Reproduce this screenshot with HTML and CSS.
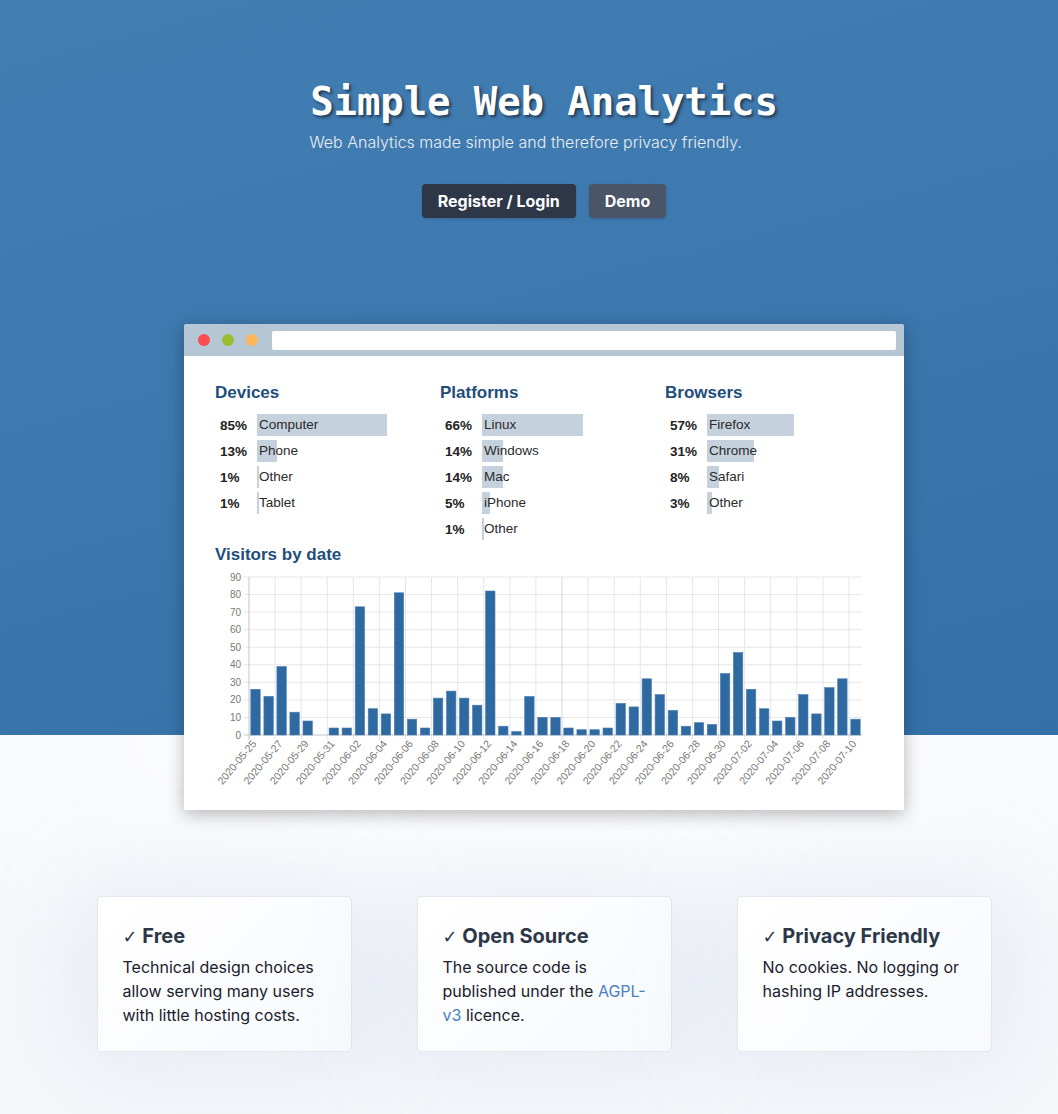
FILE: index.html
```html
<!DOCTYPE html>
<html lang="en">
<head>
<meta charset="utf-8">
<title>Simple Web Analytics</title>
<link rel="stylesheet" href="styles.css">
</head>
<body>
<section class="hero">
  <div class="intro">
    <h1 class="title">Simple Web Analytics</h1>
    <p class="subtitle">Web Analytics made simple and therefore privacy friendly.</p>
  </div>
  <div class="actions">
    <a class="btn btn-dark" href="#">Register / Login</a>
    <a class="btn btn-gray" href="#">Demo</a>
  </div>
  <div class="window">
    <div class="window-bar">
      <span class="dot dot-red"></span>
      <span class="dot dot-green"></span>
      <span class="dot dot-yellow"></span>
      <span class="address"></span>
    </div>
    <div class="window-body">
      <div class="stats">
        <div class="stat">
          <h2 class="stat-title">Devices</h2>
          <div class="rows">
            <div class="row"><span class="pct">85%</span><span class="cell"><span class="bar" style="width:85%"></span><span class="label">Computer</span></span></div>
            <div class="row"><span class="pct">13%</span><span class="cell"><span class="bar" style="width:13%"></span><span class="label">Phone</span></span></div>
            <div class="row"><span class="pct">1%</span><span class="cell"><span class="bar" style="width:1%"></span><span class="label">Other</span></span></div>
            <div class="row"><span class="pct">1%</span><span class="cell"><span class="bar" style="width:1%"></span><span class="label">Tablet</span></span></div>
          </div>
        </div>
        <div class="stat">
          <h2 class="stat-title">Platforms</h2>
          <div class="rows">
            <div class="row"><span class="pct">66%</span><span class="cell"><span class="bar" style="width:66%"></span><span class="label">Linux</span></span></div>
            <div class="row"><span class="pct">14%</span><span class="cell"><span class="bar" style="width:14%"></span><span class="label">Windows</span></span></div>
            <div class="row"><span class="pct">14%</span><span class="cell"><span class="bar" style="width:14%"></span><span class="label">Mac</span></span></div>
            <div class="row"><span class="pct">5%</span><span class="cell"><span class="bar" style="width:5%"></span><span class="label">iPhone</span></span></div>
            <div class="row"><span class="pct">1%</span><span class="cell"><span class="bar" style="width:1%"></span><span class="label">Other</span></span></div>
          </div>
        </div>
        <div class="stat">
          <h2 class="stat-title">Browsers</h2>
          <div class="rows">
            <div class="row"><span class="pct">57%</span><span class="cell"><span class="bar" style="width:57%"></span><span class="label">Firefox</span></span></div>
            <div class="row"><span class="pct">31%</span><span class="cell"><span class="bar" style="width:31%"></span><span class="label">Chrome</span></span></div>
            <div class="row"><span class="pct">8%</span><span class="cell"><span class="bar" style="width:8%"></span><span class="label">Safari</span></span></div>
            <div class="row"><span class="pct">3%</span><span class="cell"><span class="bar" style="width:3%"></span><span class="label">Other</span></span></div>
          </div>
        </div>
      </div>
      <h2 class="stat-title chart-title">Visitors by date</h2>
      <svg class="chart" width="720" height="220" viewBox="0 0 720 220" xmlns="http://www.w3.org/2000/svg">
        <g class="grid">
          <line x1="60" y1="148.4" x2="678" y2="148.4"/>
          <line x1="60" y1="130.9" x2="678" y2="130.9"/>
          <line x1="60" y1="113.3" x2="678" y2="113.3"/>
          <line x1="60" y1="95.8" x2="678" y2="95.8"/>
          <line x1="60" y1="78.2" x2="678" y2="78.2"/>
          <line x1="60" y1="60.7" x2="678" y2="60.7"/>
          <line x1="60" y1="43.1" x2="678" y2="43.1"/>
          <line x1="60" y1="25.6" x2="678" y2="25.6"/>
          <line x1="60" y1="8" x2="678" y2="8"/>
          <line x1="91.1" y1="8" x2="91.1" y2="171"/>
          <line x1="117.2" y1="8" x2="117.2" y2="171"/>
          <line x1="143.3" y1="8" x2="143.3" y2="171"/>
          <line x1="169.3" y1="8" x2="169.3" y2="171"/>
          <line x1="195.4" y1="8" x2="195.4" y2="171"/>
          <line x1="221.5" y1="8" x2="221.5" y2="171"/>
          <line x1="247.6" y1="8" x2="247.6" y2="171"/>
          <line x1="273.7" y1="8" x2="273.7" y2="171"/>
          <line x1="299.8" y1="8" x2="299.8" y2="171"/>
          <line x1="325.9" y1="8" x2="325.9" y2="171"/>
          <line x1="351.9" y1="8" x2="351.9" y2="171"/>
          <line x1="404.1" y1="8" x2="404.1" y2="171"/>
          <line x1="430.2" y1="8" x2="430.2" y2="171"/>
          <line x1="456.3" y1="8" x2="456.3" y2="171"/>
          <line x1="482.4" y1="8" x2="482.4" y2="171"/>
          <line x1="508.4" y1="8" x2="508.4" y2="171"/>
          <line x1="534.5" y1="8" x2="534.5" y2="171"/>
          <line x1="560.6" y1="8" x2="560.6" y2="171"/>
          <line x1="586.7" y1="8" x2="586.7" y2="171"/>
          <line x1="612.8" y1="8" x2="612.8" y2="171"/>
          <line x1="638.9" y1="8" x2="638.9" y2="171"/>
          <line x1="665" y1="8" x2="665" y2="171"/>
        </g>
        <g class="axis">
          <line class="mid" x1="378" y1="8" x2="378" y2="171"/>
          <line x1="60" y1="166" x2="678" y2="166"/>
          <line x1="65" y1="8" x2="65" y2="171"/>
        </g>
        <g class="ylabels">
          <text x="57" y="169.5">0</text>
          <text x="57" y="151.9">10</text>
          <text x="57" y="134.4">20</text>
          <text x="57" y="116.8">30</text>
          <text x="57" y="99.3">40</text>
          <text x="57" y="81.7">50</text>
          <text x="57" y="64.2">60</text>
          <text x="57" y="46.6">70</text>
          <text x="57" y="29.1">80</text>
          <text x="57" y="11.5">90</text>
        </g>
        <g class="bars">
          <rect x="66.8" y="120.3" width="9.4" height="45.7"/>
          <rect x="79.9" y="127.4" width="9.4" height="38.6"/>
          <rect x="92.9" y="97.5" width="9.4" height="68.5"/>
          <rect x="105.9" y="143.2" width="9.4" height="22.8"/>
          <rect x="119" y="152" width="9.4" height="14"/>
          <rect x="145.1" y="159" width="9.4" height="7"/>
          <rect x="158.1" y="159" width="9.4" height="7"/>
          <rect x="171.2" y="37.8" width="9.4" height="128.2"/>
          <rect x="184.2" y="139.7" width="9.4" height="26.3"/>
          <rect x="197.2" y="144.9" width="9.4" height="21.1"/>
          <rect x="210.3" y="23.8" width="9.4" height="142.2"/>
          <rect x="223.3" y="150.2" width="9.4" height="15.8"/>
          <rect x="236.4" y="159" width="9.4" height="7"/>
          <rect x="249.4" y="129.1" width="9.4" height="36.9"/>
          <rect x="262.5" y="122.1" width="9.4" height="43.9"/>
          <rect x="275.5" y="129.1" width="9.4" height="36.9"/>
          <rect x="288.5" y="136.2" width="9.4" height="29.8"/>
          <rect x="301.6" y="22" width="9.4" height="144"/>
          <rect x="314.6" y="157.2" width="9.4" height="8.8"/>
          <rect x="327.7" y="162.5" width="9.4" height="3.5"/>
          <rect x="340.7" y="127.4" width="9.4" height="38.6"/>
          <rect x="353.8" y="148.4" width="9.4" height="17.6"/>
          <rect x="366.8" y="148.4" width="9.4" height="17.6"/>
          <rect x="379.8" y="159" width="9.4" height="7"/>
          <rect x="392.9" y="160.7" width="9.4" height="5.3"/>
          <rect x="405.9" y="160.7" width="9.4" height="5.3"/>
          <rect x="419" y="159" width="9.4" height="7"/>
          <rect x="432" y="134.4" width="9.4" height="31.6"/>
          <rect x="445.1" y="137.9" width="9.4" height="28.1"/>
          <rect x="458.1" y="109.8" width="9.4" height="56.2"/>
          <rect x="471.1" y="125.6" width="9.4" height="40.4"/>
          <rect x="484.2" y="141.4" width="9.4" height="24.6"/>
          <rect x="497.2" y="157.2" width="9.4" height="8.8"/>
          <rect x="510.3" y="153.7" width="9.4" height="12.3"/>
          <rect x="523.3" y="155.5" width="9.4" height="10.5"/>
          <rect x="536.4" y="104.5" width="9.4" height="61.5"/>
          <rect x="549.4" y="83.5" width="9.4" height="82.5"/>
          <rect x="562.4" y="120.3" width="9.4" height="45.7"/>
          <rect x="575.5" y="139.7" width="9.4" height="26.3"/>
          <rect x="588.5" y="152" width="9.4" height="14"/>
          <rect x="601.6" y="148.4" width="9.4" height="17.6"/>
          <rect x="614.6" y="125.6" width="9.4" height="40.4"/>
          <rect x="627.7" y="144.9" width="9.4" height="21.1"/>
          <rect x="640.7" y="118.6" width="9.4" height="47.4"/>
          <rect x="653.7" y="109.8" width="9.4" height="56.2"/>
          <rect x="666.8" y="150.2" width="9.4" height="15.8"/>
        </g>
        <g class="xlabels">
          <text transform="translate(73 175) rotate(-50)">2020-05-25</text>
          <text transform="translate(99.1 175) rotate(-50)">2020-05-27</text>
          <text transform="translate(125.2 175) rotate(-50)">2020-05-29</text>
          <text transform="translate(151.3 175) rotate(-50)">2020-05-31</text>
          <text transform="translate(177.4 175) rotate(-50)">2020-06-02</text>
          <text transform="translate(203.5 175) rotate(-50)">2020-06-04</text>
          <text transform="translate(229.5 175) rotate(-50)">2020-06-06</text>
          <text transform="translate(255.6 175) rotate(-50)">2020-06-08</text>
          <text transform="translate(281.7 175) rotate(-50)">2020-06-10</text>
          <text transform="translate(307.8 175) rotate(-50)">2020-06-12</text>
          <text transform="translate(333.9 175) rotate(-50)">2020-06-14</text>
          <text transform="translate(360 175) rotate(-50)">2020-06-16</text>
          <text transform="translate(386 175) rotate(-50)">2020-06-18</text>
          <text transform="translate(412.1 175) rotate(-50)">2020-06-20</text>
          <text transform="translate(438.2 175) rotate(-50)">2020-06-22</text>
          <text transform="translate(464.3 175) rotate(-50)">2020-06-24</text>
          <text transform="translate(490.4 175) rotate(-50)">2020-06-26</text>
          <text transform="translate(516.5 175) rotate(-50)">2020-06-28</text>
          <text transform="translate(542.6 175) rotate(-50)">2020-06-30</text>
          <text transform="translate(568.6 175) rotate(-50)">2020-07-02</text>
          <text transform="translate(594.7 175) rotate(-50)">2020-07-04</text>
          <text transform="translate(620.8 175) rotate(-50)">2020-07-06</text>
          <text transform="translate(646.9 175) rotate(-50)">2020-07-08</text>
          <text transform="translate(673 175) rotate(-50)">2020-07-10</text>
        </g>
      </svg>
    </div>
  </div>
</section>
<section class="features">
  <div class="cards">
    <div class="card">
      <h3 class="card-title"><span class="check">✓</span> Free</h3>
      <p class="card-text">Technical design choices allow serving many users with little hosting costs.</p>
    </div>
    <div class="card">
      <h3 class="card-title"><span class="check">✓</span> Open Source</h3>
      <p class="card-text">The source code is published under the <a href="#">AGPL-v3</a> licence.</p>
    </div>
    <div class="card">
      <h3 class="card-title"><span class="check">✓</span> Privacy Friendly</h3>
      <p class="card-text">No cookies. No logging or hashing IP addresses.</p>
    </div>
  </div>
</section>
</body>
</html>
```
FILE: styles.css
```css
* { box-sizing: border-box; }

html, body {
  margin: 0;
  padding: 0;
}

body {
  font-family: Inter, "Noto Sans", sans-serif;
  color: #1a202c;
  background:
    radial-gradient(ellipse 900px 260px at 50% 735px, #ffffff 0%, rgba(255,255,255,0) 100%),
    #f5f7fa;
  min-height: 1114px;
}

.hero {
  display: flow-root;
  background: linear-gradient(165deg, #437eb3 0%, #3d78ae 45%, #3470a7 100%);
  padding: 79px 0 0 30px;
}

.intro {
  width: fit-content;
  margin: 0 auto;
}

.title {
  margin: 0;
  font-family: "DejaVu Sans Mono", "Liberation Mono", monospace;
  font-weight: bold;
  font-size: 39px;
  line-height: 46px;
  color: #ffffff;
  text-shadow: 2px 2px 3px rgba(20, 30, 45, 0.7);
  letter-spacing: -0.1px;
}

.subtitle {
  margin: 5px 0 0 -1px;
  font-weight: 300;
  font-size: 16px;
  line-height: 24px;
  color: #e8edf3;
}

.actions {
  display: flex;
  justify-content: center;
  gap: 13px;
  margin-top: 30px;
}

.btn {
  display: block;
  padding: 8px 16px;
  font-size: 16px;
  line-height: 18px;
  font-weight: 700;
  color: #ffffff;
  text-decoration: none;
  border-radius: 4px;
  box-shadow: 0 1px 3px rgba(0, 0, 0, 0.15);
}

.btn-dark { background: #2d3748; }
.btn-gray { background: #4a5568; }

.window {
  position: relative;
  width: 720px;
  margin: 106px auto -75px;
  background: #ffffff;
  border-radius: 3px 3px 0 0;
  box-shadow: 0 4px 18px rgba(0, 0, 0, 0.28);
  font-family: "Liberation Sans", Arial, sans-serif;
}

.window-bar {
  display: flex;
  align-items: center;
  height: 32px;
  padding: 0 8px 0 14px;
  background: #b5c6d5;
  border-radius: 3px 3px 0 0;
}

.dot {
  width: 12px;
  height: 12px;
  border-radius: 50%;
  margin-right: 12px;
  flex: none;
}
.dot-red { background: #fb4c4f; }
.dot-green { background: #9bbd31; }
.dot-yellow { background: #fdb65a; margin-right: 14px; }

.address {
  flex: 1;
  height: 19px;
  background: #ffffff;
  border-radius: 2px;
}

.window-body {
  padding: 27px 0 21px 31px;
}

.stats {
  display: grid;
  grid-template-columns: 225px 225px 225px;
  margin-bottom: 5px;
}

.stat-title {
  margin: 0;
  font-size: 17px;
  line-height: 20px;
  font-weight: bold;
  color: #1e4e7c;
}

.rows {
  display: flex;
  flex-direction: column;
  gap: 4px;
  margin-top: 11px;
  padding-left: 5px;
}

.row {
  display: flex;
  height: 22px;
  align-items: center;
  font-size: 13.5px;
  color: #222;
}

.pct {
  width: 37px;
  font-weight: bold;
  color: #222;
}

.cell {
  display: grid;
  width: 153px;
  height: 22px;
}

.bar, .label {
  grid-area: 1 / 1;
}

.bar {
  height: 22px;
  min-width: 1.5px;
  background: #c5d1dd;
}

.label {
  padding-left: 2px;
  line-height: 22px;
  white-space: nowrap;
  color: #2b2b2b;
}

.chart-title {
  margin: 0;
}

.chart {
  display: block;
  margin: 4px 0 0 -31px;
}

.grid line {
  stroke: #e6e6e6;
  stroke-width: 1;
}

.axis line {
  stroke: #c4c4c4;
  stroke-width: 1;
}

.axis line.mid {
  stroke: #d6d6d6;
}

.ylabels text {
  font-family: "Liberation Sans", Arial, sans-serif;
  font-size: 10px;
  fill: #777;
  text-anchor: end;
}

.xlabels text {
  font-family: "Liberation Sans", Arial, sans-serif;
  font-size: 10.5px;
  fill: #777;
  text-anchor: end;
}

.bars rect {
  fill: #2f69a1;
  stroke: #4a7fb2;
  stroke-width: 0.6;
}

.features {
  padding: 161px 0 40px 30px;
}

.cards {
  display: grid;
  grid-template-columns: repeat(3, 255px);
  gap: 65px;
  justify-content: center;
}

.card {
  padding: 25px 24px 24px 25px;
  background: linear-gradient(135deg, #ffffff 0%, #f7f9fc 100%);
  border: 1px solid #e2e8f0;
  border-radius: 4px;
  box-shadow: 0 0 90px 20px rgba(170, 190, 215, 0.18);
}

.card-title {
  margin: 0 0 4px;
  font-size: 20px;
  line-height: 28px;
  font-weight: 700;
  color: #2d3748;
}

.check {
  font-family: "DejaVu Sans", sans-serif;
  font-weight: normal;
  font-size: 18px;
}

.card-text {
  margin: 0;
  font-size: 16px;
  line-height: 24px;
  color: #1a202c;
}

.card-text a {
  color: #4a80bf;
  text-decoration: none;
}
```
